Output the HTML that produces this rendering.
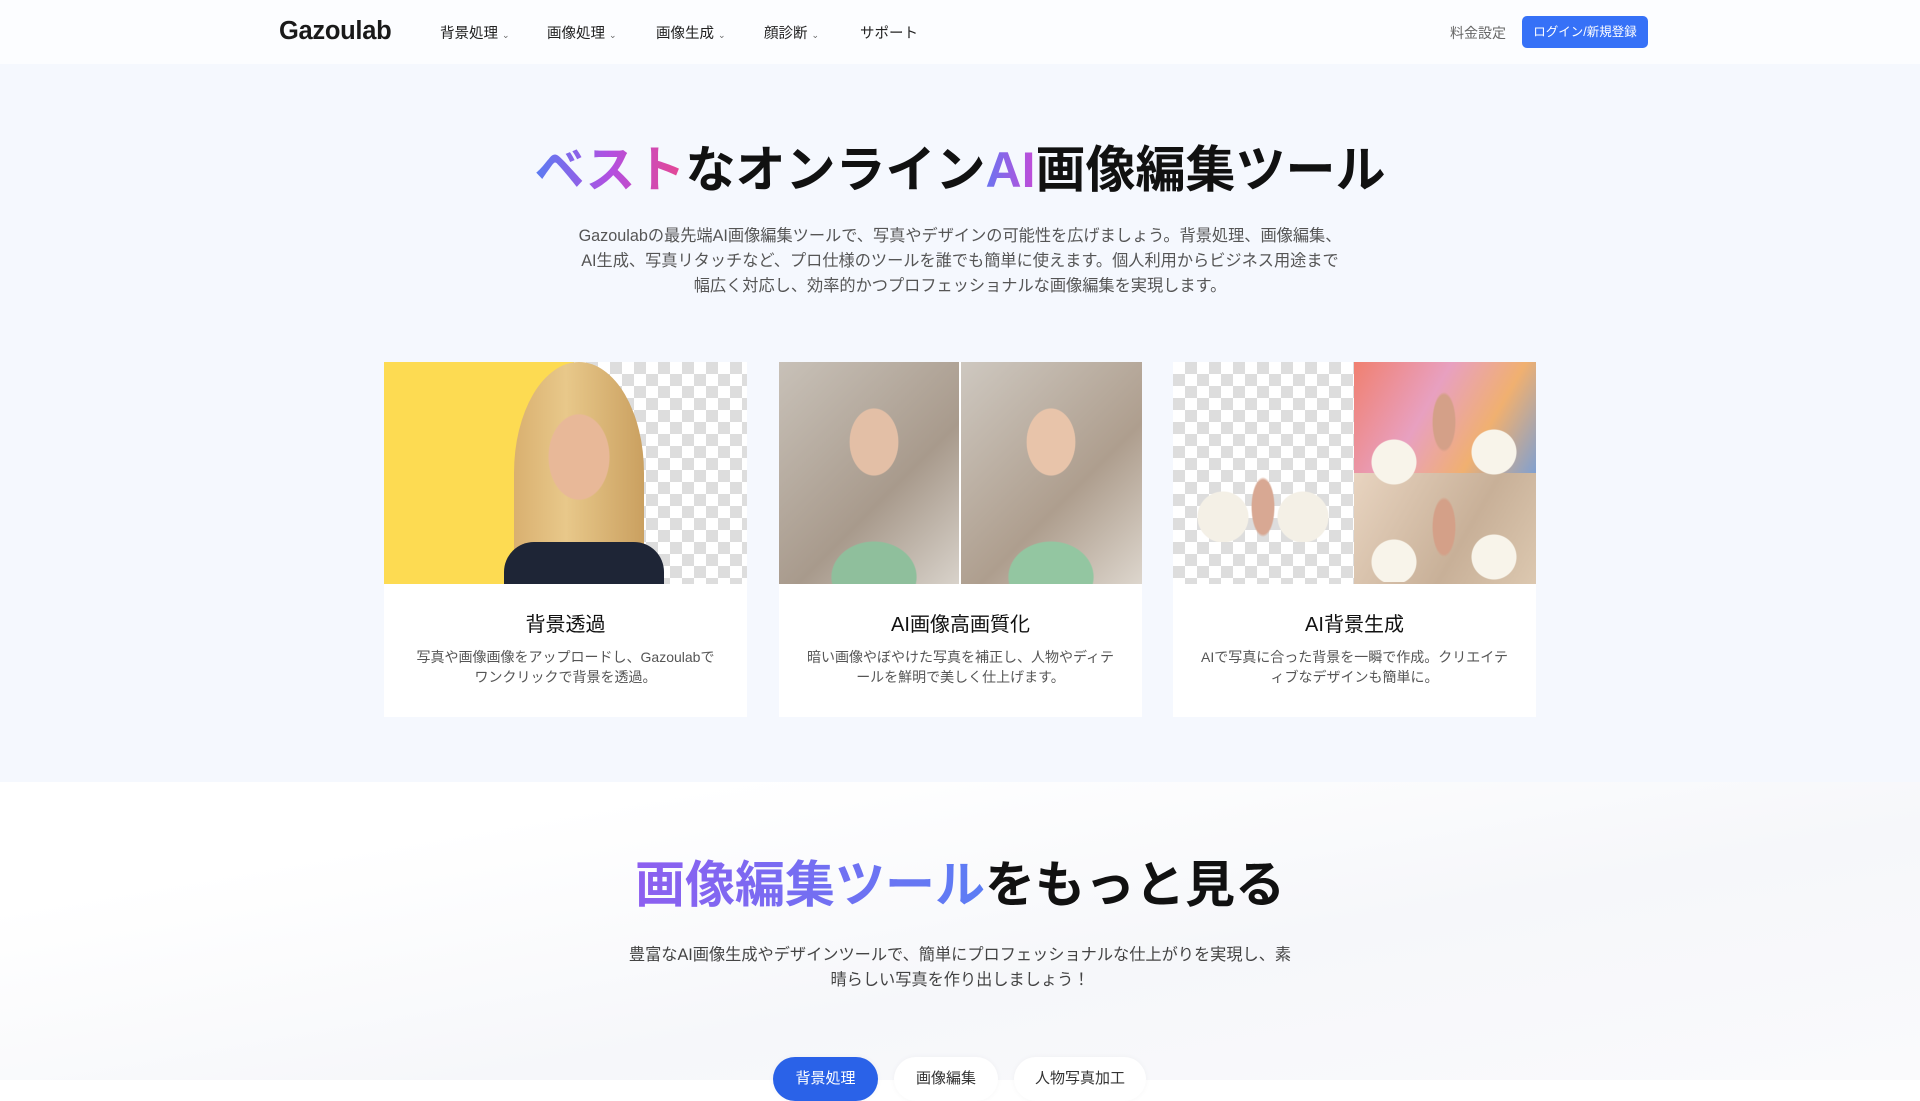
<!DOCTYPE html>
<html><head><meta charset="utf-8">
<style>
*{margin:0;padding:0;box-sizing:border-box}
body{width:1920px;height:1080px;overflow:hidden;background:#fff;font-family:"Liberation Sans","Noto Sans CJK JP",sans-serif;color:#222}
.hdr{position:absolute;top:0;left:0;width:1920px;height:64px;background:#fcfdff}
.logo{position:absolute;left:279px;top:17px;font-size:25.5px;font-weight:bold;color:#1a1a1a;letter-spacing:-0.3px}
.nav{position:absolute;top:22px;font-size:14.5px;color:#222}
.nav span{font-size:9px;color:#666;margin-left:4px}
.price{position:absolute;left:1450px;top:23px;font-size:14px;color:#666}
.btn{position:absolute;left:1522px;top:16px;width:126px;height:32px;background:#3671f7;border-radius:5px;color:#fff;font-size:12.5px;text-align:center;line-height:32px}
.hero{position:absolute;top:64px;left:0;width:1920px;height:718px;background:#f5f8fe}
h1{position:absolute;top:138px;left:0;width:1920px;text-align:center;font-size:50px;font-weight:bold;color:#111;line-height:64px}
.g1{background:linear-gradient(90deg,#5a7cf2,#b34fe0,#e8478f);-webkit-background-clip:text;color:transparent}
.g2{background:linear-gradient(90deg,#8d5ff0,#5c7df4);-webkit-background-clip:text;color:transparent}
.p{position:absolute;left:0;width:1920px;text-align:center;font-size:16.2px;line-height:25px;color:#555}
.card{position:absolute;top:362px;width:363px;height:355px;background:#fff}
.img{height:222px;position:relative;overflow:hidden}
.ct{position:absolute;top:246px;width:100%;text-align:center;font-size:20px;color:#111}
.cd{position:absolute;top:285px;left:25px;right:25px;text-align:center;font-size:14px;line-height:20px;color:#555}
.chk{background-color:#fff;background-image:linear-gradient(45deg,#ddd 25%,transparent 25%,transparent 75%,#ddd 75%),linear-gradient(45deg,#ddd 25%,transparent 25%,transparent 75%,#ddd 75%);background-size:24px 24px;background-position:0 0,12px 12px}
.tab{position:absolute;top:1057px;height:44px;border-radius:22px;font-size:15px;text-align:center;line-height:44px;background:#fff;color:#333;box-shadow:0 0 6px rgba(0,0,0,.04)}
</style></head><body>
<div class="hdr">
<div class="logo">Gazoulab</div>
<div class="nav" style="left:440px">背景処理<span>⌄</span></div>
<div class="nav" style="left:547px">画像処理<span>⌄</span></div>
<div class="nav" style="left:656px">画像生成<span>⌄</span></div>
<div class="nav" style="left:764px">顔診断<span>⌄</span></div>
<div class="nav" style="left:860px">サポート</div>
<div class="price">料金設定</div>
<div class="btn">ログイン/新規登録</div>
</div>
<div class="hero"></div>
<h1><span class="g1">ベスト</span>なオンライン<span class="g1" style="background:linear-gradient(90deg,#6b74f0,#c34bd8);-webkit-background-clip:text">AI</span>画像編集ツール</h1>
<div class="p" style="top:224px">Gazoulabの最先端AI画像編集ツールで、写真やデザインの可能性を広げましょう。背景処理、画像編集、<br>AI生成、写真リタッチなど、プロ仕様のツールを誰でも簡単に使えます。個人利用からビジネス用途まで<br>幅広く対応し、効率的かつプロフェッショナルな画像編集を実現します。</div>

<div class="card" style="left:384px">
<div class="img"><div style="position:absolute;left:0;top:0;width:190px;height:222px;background:#fddb52"></div><div class="chk" style="position:absolute;left:190px;top:0;width:173px;height:222px"></div>
<div style="position:absolute;left:130px;top:0;width:130px;height:222px;background:radial-gradient(ellipse 50px 70px at 65px 95px,#e8b898 60%,transparent 62%),linear-gradient(90deg,#d9b070,#e8c88a 40%,#caa060);border-radius:50% 50% 0 0"></div>
<div style="position:absolute;left:120px;top:180px;width:160px;height:42px;background:#1e2536;border-radius:30px 30px 0 0"></div></div>
<div class="ct">背景透過</div><div class="cd">写真や画像画像をアップロードし、Gazoulabで<br>ワンクリックで背景を透過。</div></div>

<div class="card" style="left:779px">
<div class="img"><div style="position:absolute;left:0;top:0;width:180px;height:222px;background:radial-gradient(ellipse 40px 55px at 95px 80px,#e3bfa6 60%,transparent 62%),radial-gradient(ellipse 60px 50px at 95px 215px,#8fbf9c 70%,transparent 72%),linear-gradient(135deg,#c8c1b8,#a89a8c 60%,#d8d2ca)"></div>
<div style="position:absolute;left:182px;top:0;width:181px;height:222px;background:radial-gradient(ellipse 40px 55px at 90px 80px,#e8c4aa 60%,transparent 62%),radial-gradient(ellipse 60px 50px at 90px 215px,#93c6a1 70%,transparent 72%),linear-gradient(135deg,#cec8c0,#ae9e8e 60%,#ddd6cd)"></div></div>
<div class="ct">AI画像高画質化</div><div class="cd">暗い画像やぼやけた写真を補正し、人物やディテ<br>ールを鮮明で美しく仕上げます。</div></div>

<div class="card" style="left:1173px">
<div class="img"><div class="chk" style="position:absolute;left:0;top:0;width:181px;height:222px"></div>
<div style="position:absolute;left:20px;top:110px;width:140px;height:70px;background:radial-gradient(circle at 30px 45px,#f4f0e6 25px,transparent 26px),radial-gradient(circle at 110px 45px,#f4f0e6 25px,transparent 26px),radial-gradient(ellipse 12px 30px at 70px 35px,#d8a893 90%,transparent)"></div>
<div style="position:absolute;left:181px;top:0;width:182px;height:111px;background:linear-gradient(120deg,#f08070,#e8a0c0 40%,#f0b070 70%,#80a0d0)"></div>
<div style="position:absolute;left:181px;top:111px;width:182px;height:111px;background:linear-gradient(120deg,#e8d4c0,#c8b098 60%,#dcc8b0)"></div>
<div style="position:absolute;left:181px;top:20px;width:182px;height:200px;background:radial-gradient(circle at 40px 80px,#f8f4ea 22px,transparent 23px),radial-gradient(circle at 140px 70px,#f8f4ea 22px,transparent 23px),radial-gradient(circle at 40px 180px,#f8f4ea 22px,transparent 23px),radial-gradient(circle at 140px 175px,#f8f4ea 22px,transparent 23px),radial-gradient(ellipse 12px 30px at 90px 40px,#d4a088 90%,transparent),radial-gradient(ellipse 12px 30px at 90px 145px,#d4a088 90%,transparent)"></div></div>
<div class="ct">AI背景生成</div><div class="cd">AIで写真に合った背景を一瞬で作成。クリエイテ<br>ィブなデザインも簡単に。</div></div>

<div style="position:absolute;top:782px;left:0;width:1920px;height:298px;background:linear-gradient(170deg,#fff 20%,#f6f7fa 60%,#fafafc)"></div>
<h1 style="top:853px"><span class="g2">画像編集ツール</span>をもっと見る</h1>
<div class="p" style="top:943px;color:#444">豊富なAI画像生成やデザインツールで、簡単にプロフェッショナルな仕上がりを実現し、素<br>晴らしい写真を作り出しましょう！</div>
<div class="tab" style="left:773px;width:105px;background:#2a62e8;color:#fff">背景処理</div>
<div class="tab" style="left:894px;width:104px">画像編集</div>
<div class="tab" style="left:1014px;width:132px">人物写真加工</div>
</body></html>
